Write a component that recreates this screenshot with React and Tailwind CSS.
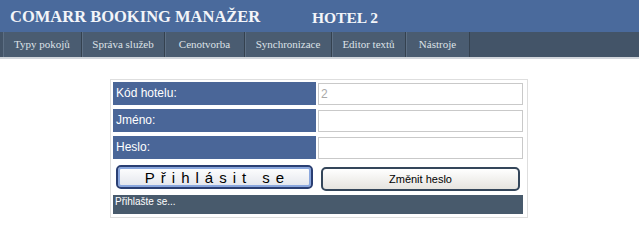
const tabs = ['Typy pokojů', 'Správa služeb', 'Cenotvorba', 'Synchronizace', 'Editor textů', 'Nástroje'];
const tabWidths = ['w-[79px]', 'w-[83px]', 'w-[80px]', 'w-[87px]', 'w-[74px]', 'w-[64px]'];

function LabelCell({ children }) {
    return (
        <div className="h-[23px] bg-[#4a6698] text-white text-[12px] leading-[23px] pl-[3px] font-['Liberation_Sans',Arial,sans-serif]">
            {children}
        </div>
    );
}

function InputCell({ value }) {
    return (
        <div className="h-[23px] flex items-center">
            <input
                className="h-[22px] w-full bg-white border border-[#c9c9c9] px-[2px] text-[12px] text-[#a9a9a9] outline-none font-['Liberation_Sans',Arial,sans-serif]"
                defaultValue={value}
            />
        </div>
    );
}

export default function App() {
    return (
        <div className="w-[639px] h-[244px] bg-white overflow-hidden">
            <div className="h-[32px] bg-[#4a6a9c] flex items-end pb-[7px] font-['Liberation_Serif','Times_New_Roman',serif] font-bold text-[#f3f5f9]">
                <span className="ml-[10px] w-[302px] text-[16.5px] leading-none">COMARR BOOKING MANAŽER</span>
                <span className="text-[15.5px] leading-none">HOTEL 2</span>
            </div>
            <div className="h-[27px] bg-[#435468] flex pl-[3px] border-b-2 border-[#d2d6dc]">
                {tabs.map((t, i) => (
                    <div
                        key={t}
                        className={`${tabWidths[i]} h-full bg-[#4a5c71] border-r border-[#34414f] shadow-[inset_1px_0_0_#5d6f84] flex items-center justify-center text-[11px] text-[#dde2e8] font-['Liberation_Serif','Times_New_Roman',serif]`}
                    >
                        {t}
                    </div>
                ))}
            </div>

            <div className="ml-[110px] mt-[20px] w-[418px] border border-[#dedede] p-[2px] pb-[3px]">
                <div className="grid grid-cols-[203px_205px] gap-x-[2px] gap-y-[4px]">
                    <LabelCell>Kód hotelu:</LabelCell>
                    <InputCell value="2" />
                    <LabelCell>Jméno:</LabelCell>
                    <InputCell value="" />
                    <LabelCell>Heslo:</LabelCell>
                    <InputCell value="" />
                    <div className="h-[28px] pt-[2px] px-[3px]">
                        <button className="h-[24px] w-full rounded-[5px] border-2 border-[#2a3f73] bg-gradient-to-b from-[#ffffff] to-[#e2e5ec] shadow-[inset_0_0_0_2px_#8aa7de] text-[15px] tracking-[6px] pl-[6px] text-black font-['Liberation_Sans',Arial,sans-serif]">
                            Přihlásit se
                        </button>
                    </div>
                    <div className="h-[28px] pt-[2px] px-[3px]">
                        <button className="h-[24px] w-full rounded-[5px] border-2 border-[#34465a] bg-gradient-to-b from-[#ffffff] to-[#e6e4df] text-[11px] text-black font-['Liberation_Sans',Arial,sans-serif]">
                            Změnit heslo
                        </button>
                    </div>
                    <div className="col-span-2 h-[19px] bg-[#485a6c] text-white text-[10px] leading-[14px] pl-[2px] font-['Liberation_Sans',Arial,sans-serif]">
                        Přihlašte se...
                    </div>
                </div>
            </div>
        </div>
    );
}
